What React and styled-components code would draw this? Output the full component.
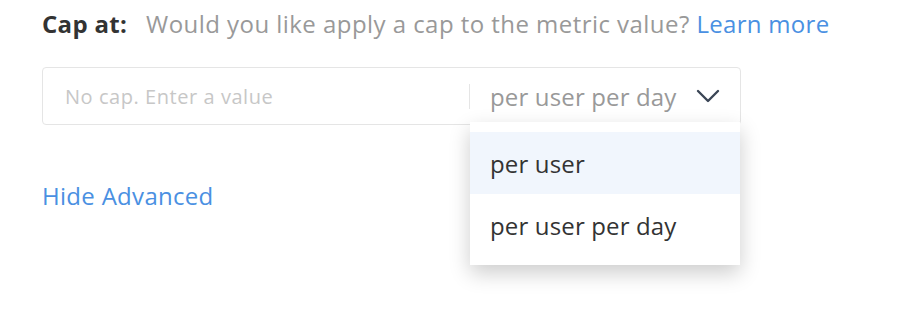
import React from "react";
import styled, { createGlobalStyle } from "styled-components";

const Global = createGlobalStyle`
  html, body { margin: 0; padding: 0; background: #fff; }
  body { font-family: "Open Sans", Lato, sans-serif; letter-spacing: 0.3px; }
`;

const Page = styled.div`
  padding: 9px 0 0 42px;
  width: 904px;
  height: 328px;
  box-sizing: border-box;
`;

const Header = styled.div`
  display: flex;
  align-items: baseline;
  font-size: 24px;
  line-height: 30px;
`;

const Label = styled.span`
  font-weight: 700;
  color: #333;
  margin-right: 19px;
`;

const Hint = styled.span`
  color: #999;
  letter-spacing: 0.45px;
`;

const Link = styled.a`
  color: #4a90e2;
  text-decoration: none;
  cursor: pointer;
  font-size: 24px;
  line-height: 30px;
`;

const Field = styled.div`
  position: relative;
  margin-top: 28px;
  width: 699px;
  height: 58px;
  box-sizing: border-box;
  border: 1px solid #e5e5e5;
  border-radius: 4px;
  display: flex;
  align-items: center;
`;

const Input = styled.input`
  flex: 0 0 426px;
  box-sizing: border-box;
  height: 100%;
  border: none;
  outline: none;
  background: transparent;
  padding: 0 0 0 22px;
  font-family: "Open Sans", sans-serif;
  font-size: 20px;
  letter-spacing: 0.55px;
  color: #333;
  &::placeholder { color: #c7c7c7; }
`;

const Divider = styled.div`
  width: 1px;
  height: 25px;
  background: #e5e5e5;
`;

const SelectBox = styled.div`
  position: relative;
  flex: 1;
  height: 100%;
  display: flex;
  align-items: center;
  justify-content: space-between;
  padding: 0 20px;
  font-size: 24px;
  letter-spacing: 0.15px;
  color: #999;
`;

const Menu = styled.div`
  position: absolute;
  top: 54px;
  left: 0;
  width: 270px;
  padding: 10px 0 9px;
  background: #fff;
  box-shadow: 0 8px 20px rgba(0, 0, 0, 0.2);
  z-index: 2;
`;

const Option = styled.div`
  height: 62px;
  display: flex;
  align-items: center;
  padding-left: 20px;
  font-size: 24px;
  color: #333;
  background: ${(p) => (p.$active ? "#f1f6fd" : "#fff")};
`;

const Footer = styled.div`
  margin-top: 56px;
  line-height: 30px;
`;

const Chevron = () => (
  <svg width="24" height="14" viewBox="0 0 24 14" fill="none">
    <path d="M2 2l10 10L22 2" stroke="#3b4656" strokeWidth="2.4" strokeLinecap="round" strokeLinejoin="round" />
  </svg>
);

export default function App() {
  return (
    <Page>
      <Global />
      <Header>
        <Label>Cap at:</Label>
        <Hint>Would you like apply a cap to the metric value?&nbsp;</Hint>
        <Link>Learn more</Link>
      </Header>
      <Field>
        <Input placeholder="No cap. Enter a value" />
        <Divider />
        <SelectBox>
          <span>per user per day</span>
          <Chevron />
          <Menu>
            <Option $active>per user</Option>
            <Option>per user per day</Option>
          </Menu>
        </SelectBox>
      </Field>
      <Footer>
        <Link>Hide Advanced</Link>
      </Footer>
    </Page>
  );
}
